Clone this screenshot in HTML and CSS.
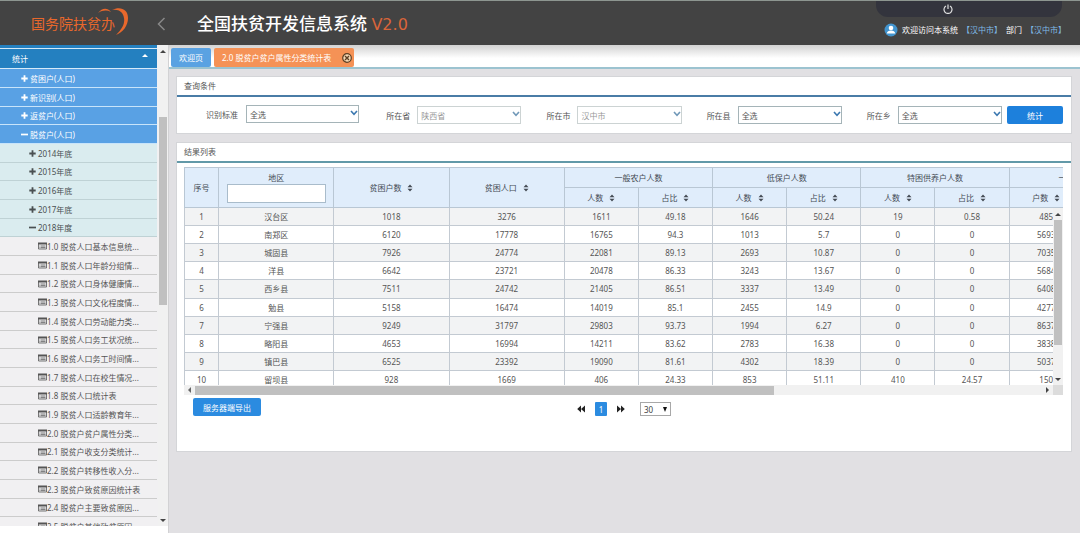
FILE: index.html
```html
<!DOCTYPE html>
<html lang="zh-CN">
<head>
<meta charset="utf-8">
<title>全国扶贫开发信息系统</title>
<link rel="stylesheet" href="styles.css">
</head>
<body>
<svg class="defs" aria-hidden="true">
  <symbol id="plus" viewBox="0 0 7 7"><path d="M3.5 .3v6.4M.3 3.5h6.4" stroke="currentColor" stroke-width="1.8"/></symbol>
  <symbol id="minus" viewBox="0 0 7 7"><path d="M0 3.5h7" stroke="currentColor" stroke-width="1.7"/></symbol>
  <symbol id="sheet" viewBox="0 0 9 8"><path d="M0 .5h9v2H0z" fill="currentColor"/><path d="M.5 1v6h8V1M1.500 4h1M3 4h4.500M1.500 5.600h1M3 5.600h4.500" fill="none" stroke="currentColor" stroke-width=".8"/></symbol>
  <symbol id="sort" viewBox="0 0 6 8"><path d="M.5 3.300 3 .5l2.500 2.800zM.5 4.700 3 7.500l2.500-2.800z" fill="currentColor"/></symbol>
  <symbol id="chevron" viewBox="0 0 8 6"><path d="M1 1l3 3.300L7 1" fill="none" stroke="currentColor" stroke-width="1.600"/></symbol>
  <symbol id="rewind" viewBox="0 0 8 8"><path d="M4 .5v7L.2 4zM8 .5v7L4 4z" fill="currentColor"/></symbol>
</svg>

<header class="topbar">
  <div class="logo">国务院扶贫办
    <svg class="swoosh" viewBox="0 0 34 30" aria-hidden="true"><path d="M1 6C5 1 10 0 14 5 10 3 6 3 1 6zM15 3C23-1 31 2 31 11 31 19 26 25 19 28 25 22 28 17 27 11 26 5 22 2 15 3z" fill="#e8682c"/></svg>
  </div>
  <button class="collapse" aria-label="收起菜单"><svg viewBox="0 0 9 14"><path d="M7.500 1 1.500 7l6 6" fill="none" stroke="currentColor" stroke-width="1.500"/></svg></button>
  <h1 class="title">全国扶贫开发信息系统 <span class="version">V2.0</span></h1>
  <div class="account">
    <div class="quick"><button class="power" aria-label="退出"><svg viewBox="0 0 10 10"><path d="M3 2a4 4 0 1 0 4 0M5 .5v4.500" fill="none" stroke="currentColor" stroke-width="1.200"/></svg></button></div>
    <div class="welcome">
      <svg class="avatar" viewBox="0 0 14 14" aria-hidden="true"><circle cx="7" cy="7" r="6.500" fill="#4294ce"/><circle cx="7" cy="5" r="2.300" fill="#fff"/><path d="M2.800 10.500c0-4 8.400-4 8.400 0z" fill="#fff"/></svg>
      <span>欢迎访问本系统</span><a href="#">【汉中市】</a><span>部门</span><a href="#">【汉中市】</a>
    </div>
  </div>
</header>

<div class="shell">
<aside class="sidebar">
  <nav class="menu">
    <button class="menu-head">统计 <span class="caret"></span></button>
    <ul class="tree">
      <li class="l1"><a href="#"><svg><use href="#plus"/></svg>贫困户(人口)</a></li>
      <li class="l1"><a href="#"><svg><use href="#plus"/></svg>新识别(人口)</a></li>
      <li class="l1"><a href="#"><svg><use href="#plus"/></svg>返贫户(人口)</a></li>
      <li class="l1"><a href="#"><svg><use href="#minus"/></svg>脱贫户(人口)</a></li>
      <li class="l2"><a href="#"><svg><use href="#plus"/></svg>2014年底</a></li>
      <li class="l2"><a href="#"><svg><use href="#plus"/></svg>2015年底</a></li>
      <li class="l2"><a href="#"><svg><use href="#plus"/></svg>2016年底</a></li>
      <li class="l2"><a href="#"><svg><use href="#plus"/></svg>2017年底</a></li>
      <li class="l2"><a href="#"><svg><use href="#minus"/></svg>2018年度</a></li>
      <li class="l3"><a href="#"><svg><use href="#sheet"/></svg>1.0 脱贫人口基本信息统...</a></li>
      <li class="l3"><a href="#"><svg><use href="#sheet"/></svg>1.1 脱贫人口年龄分组情...</a></li>
      <li class="l3"><a href="#"><svg><use href="#sheet"/></svg>1.2 脱贫人口身体健康情...</a></li>
      <li class="l3"><a href="#"><svg><use href="#sheet"/></svg>1.3 脱贫人口文化程度情...</a></li>
      <li class="l3"><a href="#"><svg><use href="#sheet"/></svg>1.4 脱贫人口劳动能力类...</a></li>
      <li class="l3"><a href="#"><svg><use href="#sheet"/></svg>1.5 脱贫人口务工状况统...</a></li>
      <li class="l3"><a href="#"><svg><use href="#sheet"/></svg>1.6 脱贫人口务工时间情...</a></li>
      <li class="l3"><a href="#"><svg><use href="#sheet"/></svg>1.7 脱贫人口在校生情况...</a></li>
      <li class="l3"><a href="#"><svg><use href="#sheet"/></svg>1.8 脱贫人口统计表</a></li>
      <li class="l3"><a href="#"><svg><use href="#sheet"/></svg>1.9 脱贫人口适龄教育年...</a></li>
      <li class="l3"><a href="#"><svg><use href="#sheet"/></svg>2.0 脱贫户贫户属性分类...</a></li>
      <li class="l3"><a href="#"><svg><use href="#sheet"/></svg>2.1 脱贫户收支分类统计...</a></li>
      <li class="l3"><a href="#"><svg><use href="#sheet"/></svg>2.2 脱贫户转移性收入分...</a></li>
      <li class="l3"><a href="#"><svg><use href="#sheet"/></svg>2.3 脱贫户致贫原因统计表</a></li>
      <li class="l3"><a href="#"><svg><use href="#sheet"/></svg>2.4 脱贫户主要致贫原因...</a></li>
      <li class="l3"><a href="#"><svg><use href="#sheet"/></svg>2.5 脱贫户其他致贫原因...</a></li>
    </ul>
  </nav>
  <div class="vbar"><i class="arrow up"></i><div class="track"><div class="thumb"></div></div><i class="arrow down"></i></div>
</aside>

<main class="main">
  <div class="tabs">
    <button class="tab">欢迎页</button>
    <button class="tab active">2.0 脱贫户贫户属性分类统计表
      <svg class="close" viewBox="0 0 10 10"><circle cx="5" cy="5" r="4.300" fill="#f7d9b5" stroke="#5d4024" stroke-width="1.200"/><path d="M3 3l4 4M7 3 3 7" stroke="#5d4024" stroke-width="1.400"/></svg></button>
  </div>
  <div class="content">
    <section class="panel query">
      <h2>查询条件</h2>
      <form class="filters">
        <div class="field wide"><label for="std">识别标准</label><span class="pick"><select id="std"><option>全选</option></select><svg><use href="#chevron"/></svg></span></div>
        <div class="field"><label for="prov">所在省</label><span class="pick off"><select id="prov" disabled><option>陕西省</option></select><svg><use href="#chevron"/></svg></span></div>
        <div class="field"><label for="city">所在市</label><span class="pick off"><select id="city" disabled><option>汉中市</option></select><svg><use href="#chevron"/></svg></span></div>
        <div class="field"><label for="county">所在县</label><span class="pick"><select id="county"><option>全选</option></select><svg><use href="#chevron"/></svg></span></div>
        <div class="field last"><label for="town">所在乡</label><span class="pick"><select id="town"><option>全选</option></select><svg><use href="#chevron"/></svg></span></div>
        <button class="btn run" type="button">统计</button>
      </form>
    </section>

    <section class="panel results">
      <h2>结果列表</h2>
      <div class="grid-box">
        <div class="table-clip">
          <table>
            <colgroup><col class="c-no"><col class="c-wide"><col class="c-wide"><col class="c-wide"><col class="c"><col class="c"><col class="c"><col class="c"><col class="c"><col class="c"><col class="c"><col class="c"></colgroup>
            <thead>
              <tr><th rowspan="2">序号</th><th rowspan="2" class="area"><label for="area">地区</label><input id="area" type="text"></th><th rowspan="2">贫困户数<svg><use href="#sort"/></svg></th><th rowspan="2">贫困人口<svg><use href="#sort"/></svg></th><th colspan="2">一般农户人数</th><th colspan="2">低保户人数</th><th colspan="2">特困供养户人数</th><th colspan="2" class="cut">一般农户</th></tr>
              <tr><th>人数<svg><use href="#sort"/></svg></th><th>占比<svg><use href="#sort"/></svg></th><th>人数<svg><use href="#sort"/></svg></th><th>占比<svg><use href="#sort"/></svg></th><th>人数<svg><use href="#sort"/></svg></th><th>占比<svg><use href="#sort"/></svg></th><th>户数<svg><use href="#sort"/></svg></th><th>占比</th></tr>
            </thead>
            <tbody>
              <tr><td>1</td><td>汉台区</td><td>1018</td><td>3276</td><td>1611</td><td>49.18</td><td>1646</td><td>50.24</td><td>19</td><td>0.58</td><td>485</td><td></td></tr>
              <tr><td>2</td><td>南郑区</td><td>6120</td><td>17778</td><td>16765</td><td>94.3</td><td>1013</td><td>5.7</td><td>0</td><td>0</td><td>5693</td><td></td></tr>
              <tr><td>3</td><td>城固县</td><td>7926</td><td>24774</td><td>22081</td><td>89.13</td><td>2693</td><td>10.87</td><td>0</td><td>0</td><td>7035</td><td></td></tr>
              <tr><td>4</td><td>洋县</td><td>6642</td><td>23721</td><td>20478</td><td>86.33</td><td>3243</td><td>13.67</td><td>0</td><td>0</td><td>5684</td><td></td></tr>
              <tr><td>5</td><td>西乡县</td><td>7511</td><td>24742</td><td>21405</td><td>86.51</td><td>3337</td><td>13.49</td><td>0</td><td>0</td><td>6408</td><td></td></tr>
              <tr><td>6</td><td>勉县</td><td>5158</td><td>16474</td><td>14019</td><td>85.1</td><td>2455</td><td>14.9</td><td>0</td><td>0</td><td>4277</td><td></td></tr>
              <tr><td>7</td><td>宁强县</td><td>9249</td><td>31797</td><td>29803</td><td>93.73</td><td>1994</td><td>6.27</td><td>0</td><td>0</td><td>8637</td><td></td></tr>
              <tr><td>8</td><td>略阳县</td><td>4653</td><td>16994</td><td>14211</td><td>83.62</td><td>2783</td><td>16.38</td><td>0</td><td>0</td><td>3838</td><td></td></tr>
              <tr><td>9</td><td>镇巴县</td><td>6525</td><td>23392</td><td>19090</td><td>81.61</td><td>4302</td><td>18.39</td><td>0</td><td>0</td><td>5037</td><td></td></tr>
              <tr><td>10</td><td>留坝县</td><td>928</td><td>1669</td><td>406</td><td>24.33</td><td>853</td><td>51.11</td><td>410</td><td>24.57</td><td>150</td><td></td></tr>
            </tbody>
          </table>
          <div class="vbar body-bar"><i class="arrow up"></i><div class="track"><div class="thumb"></div></div><i class="arrow down"></i></div>
        </div>
        <div class="hbar"><i class="arrow left"></i><div class="htrack"><div class="hthumb"></div></div><i class="arrow right"></i><i class="corner"></i></div>
      </div>
      <div class="footer">
        <button class="btn export">服务器端导出</button>
        <div class="pager">
          <button class="step" aria-label="上一页"><svg><use href="#rewind"/></svg></button>
          <button class="page">1</button>
          <button class="step next" aria-label="下一页"><svg><use href="#rewind"/></svg></button>
          <span class="size"><select aria-label="每页条数"><option>30</option></select><i class="arrow down"></i></span>
        </div>
      </div>
    </section>
  </div>
</main>
</div>
</body>
</html>
```
FILE: styles.css
```css
* { box-sizing: border-box; }
body, button, input, select {
  font-family: "Noto Sans", "Noto Sans CJK SC", sans-serif;
  font-size: 8px;
}
body {
  margin: 0;
  height: 100vh;
  display: grid;
  grid-template-rows: 45px 1fr;
  color: #555;
  background: #e1e0e3;
  overflow: hidden;
}
button { border: 0; padding: 0; background: none; color: inherit; }
a { color: inherit; text-decoration: none; }
svg { display: block; flex: none; }
.defs { position: absolute; width: 0; height: 0; }

/* top bar */
.topbar {
  display: flex;
  align-items: center;
  padding: 0 14px 0 31px;
  background: #434343;
  border-top: 1px solid #8d9690;
  color: #fff;
}
.logo { position: relative; width: 98px; font-size: 14px; line-height: 20px; color: #e8682c; white-space: nowrap; padding-top: 2px; }
.swoosh { position: absolute; left: 66px; top: -5px; width: 34px; height: 30px; }
.collapse { margin-left: 28px; color: #888; padding-top: 2px; }
.collapse svg { width: 9px; height: 14px; }
.title { margin: 0 0 0 31px; font-size: 17px; line-height: 24px; font-weight: 500; white-space: nowrap; padding-top: 2px; }
.version { font-family: "DejaVu Sans", sans-serif; font-size: 16px; font-weight: 400; color: #d9653a; }
.account { margin-left: auto; align-self: stretch; }
.quick {
  width: 186px;
  height: 16px;
  margin-left: -8px;
  display: flex;
  align-items: center;
  justify-content: center;
  background: #33343d;
  border-radius: 0 0 12px 12px;
}
.power { color: #ddd; margin-right: 42px; }
.power svg { width: 10px; height: 10px; }
.welcome { display: flex; align-items: center; gap: 4px; height: 25px; white-space: nowrap; }
.welcome a { color: #7fb9e6; }
.avatar { width: 14px; height: 14px; }

.shell { display: grid; grid-template-columns: 168px minmax(0, 1fr); min-height: 0; }

/* sidebar */
.sidebar { display: grid; grid-template-columns: 1fr 10px; min-height: 0; border-bottom: 7px solid #fff; background: #f1f0f2; }
.menu { overflow: hidden; border-top: 3px solid #2480c0; margin-right: 1px; }
.menu-head {
  display: flex;
  justify-content: space-between;
  align-items: center;
  width: 100%;
  height: 21px;
  padding: 0 9px 0 12px;
  color: #fff;
  background: #2480c0;
  border: solid #d5eaf8;
  border-width: 1px 0;
}
.caret { border: solid transparent; border-width: 0 3px 3px; border-bottom-color: #fff; margin-bottom: 6px; }
.tree { list-style: none; margin: 0; padding: 0; }
.tree a { display: flex; align-items: center; gap: 2px; height: 19px; border-bottom: 1px solid #ccc; white-space: nowrap; }
.tree li:nth-child(3n) a { height: 18px; }
.tree svg { width: 7px; height: 7px; }
.tree .l1 a { padding-left: 21px; color: #fff; background: #59a1e4; border-color: #c8e4fa; }
.tree .l2 a { padding-left: 29px; background: #daecef; border-color: #bfd2d5; color: #4a5052; }
.tree .l3 a { padding-left: 38px; gap: 0; color: #555; }
.tree .l3 svg { width: 9px; height: 8px; }

/* scroll bars */
.vbar { display: flex; flex-direction: column; align-items: center; padding: 5px 0 4px; background: #f1f1f1; }
.track { flex: 1; width: 8px; }
.sidebar .track { padding-top: 64px; }
.sidebar .thumb { height: 188px; }
.thumb, .hthumb { background: #c0c0c0; }
.arrow { border: 3px solid transparent; }
.arrow.up { border-top: 0; border-bottom-color: #444; }
.arrow.down { border-bottom: 0; border-top-color: #444; }
.arrow.left { border-left: 0; border-right-color: #666; }
.arrow.right { border-right: 0; border-left-color: #444; }

/* tabs */
.main { min-width: 0; border-left: 1px solid #d2d2d4; }
.tabs {
  display: flex;
  align-items: center;
  gap: 3px;
  height: 24px;
  padding: 0 2px;
  background: linear-gradient(#d2d2d2, #fff 60%);
  border-bottom: 2px solid #9cc3d0;
}
.tab { height: 19px; padding: 0 8px; color: #fff; background: #5aa2e2; border-radius: 2px; margin-top: 2px; white-space: nowrap; }
.tab.active { display: flex; align-items: center; gap: 11px; background: #f59256; padding-right: 2px; }
.close { width: 10px; height: 10px; margin-top: 2px; }

/* panels */
.content { display: grid; gap: 8px; padding: 7px 8px 0 7px; }
.panel { min-width: 0; background: #fff; border: 1px solid #d4d5d8; }
.panel h2 { margin: 0; padding: 0 7px; height: 20px; line-height: 18px; font-size: 8px; font-weight: 400; border-bottom: 2px solid #4a7ca6; }
.results h2 { border-color: #6299a8; }
.filters {
  display: grid;
  grid-template-columns: 175fr 155fr 155fr 155fr 135fr 56px;
  gap: 5px;
  align-items: center;
  padding: 8px 8px 8px 29px;
}
.field { display: flex; align-items: center; gap: 7px; padding-right: 20px; white-space: nowrap; }
.field.wide { padding-right: 22px; gap: 8px; margin-bottom: 2px; }
.field.last { padding-right: 0; }
.pick { position: relative; flex: 1; min-width: 0; color: #3c78b0; }
.pick select { appearance: none; display: block; width: 100%; height: 18px; padding: 0 3px; border: 1px solid #a5b4b8; border-radius: 0; background: #fff; color: #555; opacity: 1; }
.pick.off select { border-color: #ccd3d3; color: #999; }
.pick.off { color: #7098b8; }
.pick svg { position: absolute; right: 1px; top: 5px; width: 8px; height: 6px; }
.btn { height: 18px; color: #fff; background: #2b8be0; border-radius: 2px; }
.run { background: #1d80dc; }

/* results table */
.grid-box { margin: 4px 8px 0 7px; }
.table-clip { position: relative; height: 218px; overflow: hidden; }
table { table-layout: fixed; border-collapse: collapse; width: 974px; }
.c-no { width: 34px; }
.c-wide { width: 115px; }
.c { width: 74px; }
th, td { border: 1px solid #c3cad2; padding: 0; text-align: center; line-height: 12px; white-space: nowrap; }
thead tr { height: 20px; }
th { background: #e0edfb; font-weight: 400; color: #454c55; border-color: #b9c7d4; }
th svg { display: inline-block; width: 6px; height: 8px; margin-left: 6px; vertical-align: -1px; }
.area label { display: block; }
.area input { display: block; width: 99px; height: 19px; margin: 0 auto; border: 1px solid #a9bccb; background: #fff; padding: 0 3px; }
th.cut { text-align: left; padding-left: 49px; }
tbody tr { height: 18px; }
tbody tr:nth-child(5n) { height: 19px; }
tbody tr:nth-child(odd) { background: #f2f3f4; }
.body-bar { position: absolute; right: 0; top: 41px; bottom: 0; width: 10px; }
.body-bar .track { padding-top: 4px; }
.body-bar .thumb { height: 125px; }
.hbar { display: flex; align-items: center; height: 10px; background: #f1f1f1; padding-left: 4px; }
.htrack { flex: 1; padding-left: 4px; }
.hthumb { width: 68%; height: 9px; }
.corner { width: 10px; height: 10px; margin-left: 4px; background: #dcdcdc; }

/* footer */
.footer { display: grid; grid-template-columns: 1fr auto 1fr; padding: 3px 16px 35px; }
.export { justify-self: start; width: 68px; }
.pager { display: flex; align-items: center; gap: 10px; margin-top: 4px; color: #222; }
.step svg { width: 8px; height: 8px; }
.step.next { transform: scaleX(-1); }
.page { width: 12px; height: 14px; color: #fff; background: #2b8be0; border-radius: 1px; }
.size { position: relative; margin-left: 5px; }
.size select { appearance: none; display: block; width: 31px; height: 14px; padding: 0 3px; border: 1px solid #a8a8a8; border-radius: 0; background: #fff; color: #444; }
.size .arrow { position: absolute; right: 4px; top: 5px; border-width: 5px 2px 0; border-top-color: #111; }
```
